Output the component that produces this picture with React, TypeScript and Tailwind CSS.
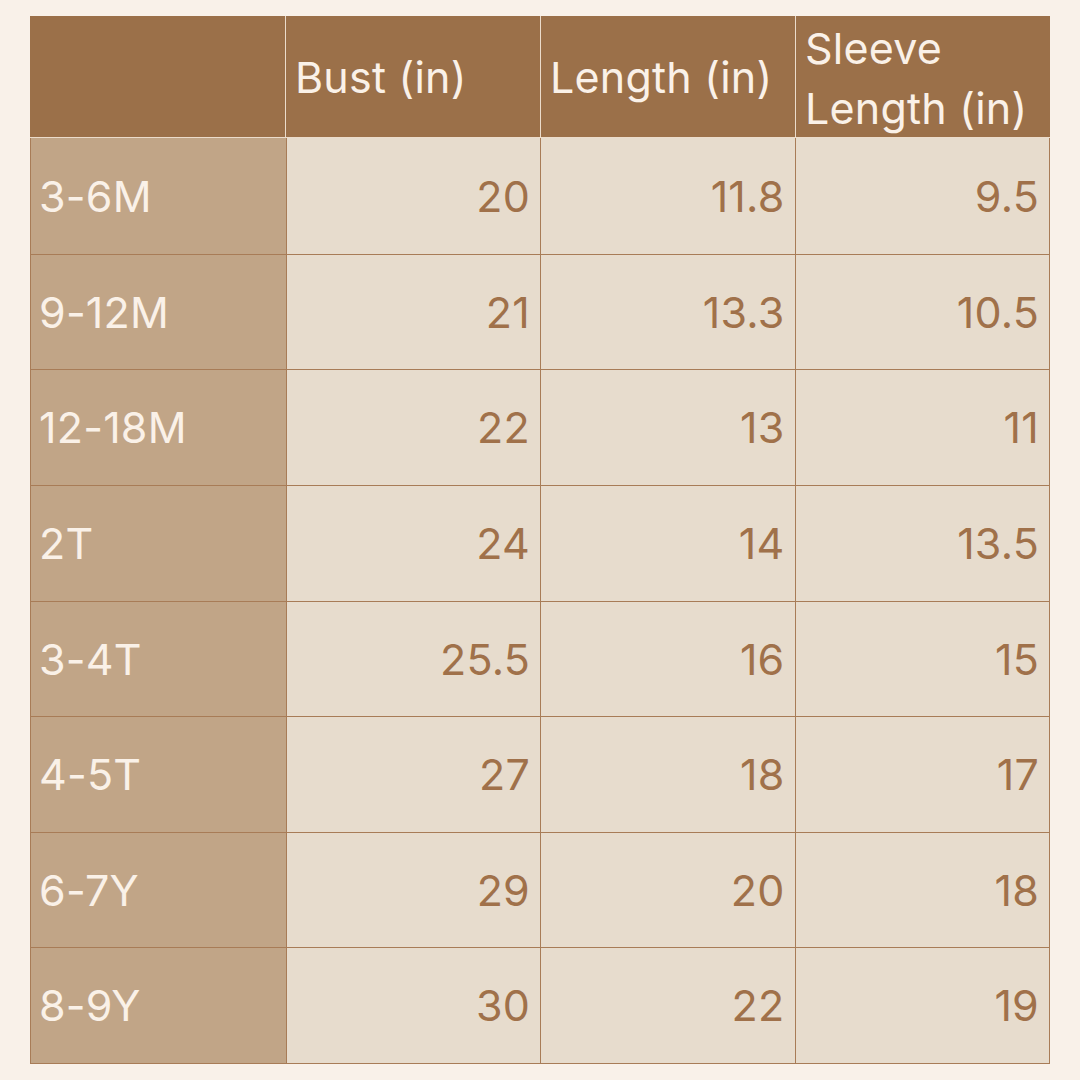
const rows = [
  ["3-6M", "20", "11.8", "9.5"],
  ["9-12M", "21", "13.3", "10.5"],
  ["12-18M", "22", "13", "11"],
  ["2T", "24", "14", "13.5"],
  ["3-4T", "25.5", "16", "15"],
  ["4-5T", "27", "18", "17"],
  ["6-7Y", "29", "20", "18"],
  ["8-9Y", "30", "22", "19"],
]

export default function App() {
  return (
    <div
      className="w-[1080px] h-[1080px] bg-[#f9f1e9] pt-[16px] pl-[30px]"
      style={{ fontFamily: "Inter, 'Noto Sans', sans-serif" }}
    >
      <div className="w-[1020px]">
        {/* header */}
        <div className="grid grid-cols-4 h-[122px] bg-[#9b7049] border-b border-[#ecdccb] text-[#faf1e8] text-[43px] leading-[1.4] tracking-[0.005em]">
          <div />
          <div className="flex items-center pl-[9px] pr-[8px] border-l border-[#ecdccb]">Bust (in)</div>
          <div className="flex items-center pl-[9px] pr-[8px] border-l border-[#ecdccb]">Length (in)</div>
          <div className="flex items-center pl-[9px] pr-[8px] pt-[2px] border-l border-[#ecdccb]">Sleeve Length (in)</div>
        </div>

        {/* body */}
        <div className="grid grid-rows-8 h-[926px] border-x border-b border-[#a87c57] text-[43px] tracking-[0.005em]">
          {rows.map((r, i) => (
            <div
              key={r[0]}
              className={
                "grid grid-cols-4 " + (i > 0 ? "border-t border-[#a87c57]" : "")
              }
            >
              <div className="flex items-center pl-[8px] bg-[#c1a587] text-[#faf1e8]">{r[0]}</div>
              {r.slice(1).map((v, j) => (
                <div
                  key={j}
                  className="flex items-center justify-end pr-[10px] bg-[#e7dccd] text-[#a0714a] border-l border-[#a87c57]"
                >
                  {v}
                </div>
              ))}
            </div>
          ))}
        </div>
      </div>
    </div>
  )
}
